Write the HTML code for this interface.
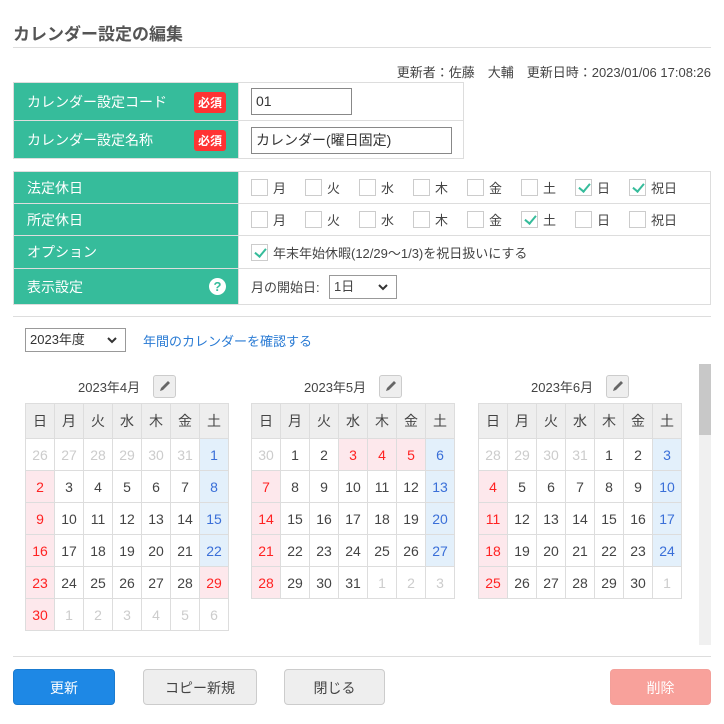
<!DOCTYPE html>
<html><head><meta charset="utf-8">
<style>
*{box-sizing:border-box;margin:0;padding:0}
body{width:724px;height:724px;background:#fff;font-family:"Liberation Sans","Noto Sans CJK JP",sans-serif;color:#444;font-size:13px;position:relative;overflow:hidden}
.abs{position:absolute}
h1{position:absolute;left:13px;top:20px;font-size:17px;font-weight:bold;color:#555}
.hr{position:absolute;left:13px;width:698px;height:1px;background:#ddd}
.tbl{position:absolute;border-collapse:collapse}
.tbl td{border:1px solid #ddd;vertical-align:middle;padding-top:0;padding-bottom:0}
.t1 td{height:38px}
.tbl td.l{background:#36bc9b;color:#fff;padding-left:13px;font-size:14px;width:225px;position:relative}
.req{position:absolute;right:12px;top:9px;background:#f33;color:#fff;font-size:12px;padding:2px 4px;border-radius:3px;font-weight:bold}
.inp{position:absolute;border:1px solid #888;height:27px;padding-left:4px;line-height:25px;font-size:14px;color:#333}
.cb{display:inline-block;width:17px;height:17px;border:1px solid #ccc;vertical-align:-3px;margin-right:5px;position:relative;background:#fff}
.cb.on::after{content:"";position:absolute;left:5px;top:1px;width:5px;height:9px;border-right:2px solid #36bc9b;border-bottom:2px solid #36bc9b;transform:rotate(40deg)}
.ci{display:inline-block;width:54px;font-size:13px;color:#444}
.mt{position:absolute;font-size:13px;color:#444}
.pen{position:absolute;width:23px;height:23px;border:1px solid #ccc;border-radius:3px;background:#eee}
.cal{position:absolute;border-collapse:collapse;width:204px;table-layout:fixed}
.cal td{border:1px solid #ddd;text-align:center;height:32px;font-size:14px;color:#444}
.cal tr.h td{background:#eee;height:35px}
.g{color:#ccc!important}.r{color:#f22!important;background:#fde8ec}.b{color:#3a6fd8!important;background:#e3f0fb}
.btn{position:absolute;top:669px;height:36px;border-radius:4px;text-align:center;line-height:36px;font-size:14px}
</style></head><body>
<h1>カレンダー設定の編集</h1>
<div class="hr" style="top:47px"></div>
<div class="abs" style="right:13px;top:62px;font-size:13px;color:#444">更新者：佐藤　大輔　更新日時：2023/01/06 17:08:26</div>

<table class="tbl t1" style="left:13px;top:82px;width:451px">
<tr><td class="l">カレンダー設定コード<span class="req">必須</span></td><td style="position:relative"><div class="inp" style="left:12px;top:5px;width:101px">01</div></td></tr>
<tr><td class="l">カレンダー設定名称<span class="req">必須</span></td><td style="position:relative"><div class="inp" style="left:12px;top:6px;width:201px">カレンダー(曜日固定)</div></td></tr>
</table>

<table class="tbl" style="left:13px;top:171px;width:698px">
<tr style="height:32px"><td class="l" style="height:32px">法定休日</td><td style="padding-left:12px;height:32px"><span class="ci"><span class="cb"></span>月</span><span class="ci"><span class="cb"></span>火</span><span class="ci"><span class="cb"></span>水</span><span class="ci"><span class="cb"></span>木</span><span class="ci"><span class="cb"></span>金</span><span class="ci"><span class="cb"></span>土</span><span class="ci"><span class="cb on"></span>日</span><span class="ci"><span class="cb on"></span>祝日</span></td></tr>
<tr style="height:32px"><td class="l" style="height:32px">所定休日</td><td style="padding-left:12px;height:32px"><span class="ci"><span class="cb"></span>月</span><span class="ci"><span class="cb"></span>火</span><span class="ci"><span class="cb"></span>水</span><span class="ci"><span class="cb"></span>木</span><span class="ci"><span class="cb"></span>金</span><span class="ci"><span class="cb on"></span>土</span><span class="ci"><span class="cb"></span>日</span><span class="ci"><span class="cb"></span>祝日</span></td></tr>
<tr style="height:33px"><td class="l" style="height:33px">オプション</td><td style="padding-left:12px;height:33px"><span class="cb on"></span>年末年始休暇(12/29～1/3)を祝日扱いにする</td></tr>
<tr style="height:36px"><td class="l" style="height:36px">表示設定<span style="position:absolute;right:12px;top:9px;width:17px;height:17px;border-radius:50%;background:#fff;color:#36bc9b;font-size:13px;font-weight:bold;text-align:center;line-height:17px">?</span></td><td style="padding-left:12px;position:relative;height:36px">月の開始日:<span style="position:absolute;left:90px;top:6px;width:68px;height:24px;border:1px solid #999;padding-left:4px;line-height:22px">1日<svg style="position:absolute;right:8px;top:8px" width="10" height="7"><path d="M1 1 L5 5 L9 1" stroke="#333" stroke-width="2" fill="none"/></svg></span></td></tr>
</table>

<div class="hr" style="top:316px"></div>
<div class="abs" style="left:25px;top:328px;width:101px;height:24px;border:1px solid #999;padding-left:4px;line-height:22px;font-size:13px;color:#333">2023年度<svg style="position:absolute;right:8px;top:8px" width="10" height="7"><path d="M1 1 L5 5 L9 1" stroke="#333" stroke-width="2" fill="none"/></svg></div>
<div class="abs" style="left:143px;top:331px;font-size:13px;color:#2a7bd4">年間のカレンダーを確認する</div>

<div class="abs" style="left:699px;top:364px;width:12px;height:281px;background:#f0f0f0"></div>
<div class="abs" style="left:699px;top:364px;width:12px;height:71px;background:#c8c8c8"></div>

<div class="mt" style="left:78px;top:377px">2023年4月</div>
<div class="pen" style="left:153px;top:375px"><svg width="21" height="21"><path d="M6 15 L7 12 L14 5 L16 7 L9 14 Z" fill="#666"/></svg></div>
<div class="mt" style="left:304px;top:377px">2023年5月</div>
<div class="pen" style="left:379px;top:375px"><svg width="21" height="21"><path d="M6 15 L7 12 L14 5 L16 7 L9 14 Z" fill="#666"/></svg></div>
<div class="mt" style="left:531px;top:377px">2023年6月</div>
<div class="pen" style="left:606px;top:375px"><svg width="21" height="21"><path d="M6 15 L7 12 L14 5 L16 7 L9 14 Z" fill="#666"/></svg></div>

<table class="cal" style="left:25px;top:403px">
<tr class="h"><td>日</td><td>月</td><td>火</td><td>水</td><td>木</td><td>金</td><td>土</td></tr>
<tr><td class="g">26</td><td class="g">27</td><td class="g">28</td><td class="g">29</td><td class="g">30</td><td class="g">31</td><td class="b">1</td></tr>
<tr><td class="r">2</td><td>3</td><td>4</td><td>5</td><td>6</td><td>7</td><td class="b">8</td></tr>
<tr><td class="r">9</td><td>10</td><td>11</td><td>12</td><td>13</td><td>14</td><td class="b">15</td></tr>
<tr><td class="r">16</td><td>17</td><td>18</td><td>19</td><td>20</td><td>21</td><td class="b">22</td></tr>
<tr><td class="r">23</td><td>24</td><td>25</td><td>26</td><td>27</td><td>28</td><td class="r">29</td></tr>
<tr><td class="r">30</td><td class="g">1</td><td class="g">2</td><td class="g">3</td><td class="g">4</td><td class="g">5</td><td class="g">6</td></tr>
</table>
<table class="cal" style="left:251px;top:403px">
<tr class="h"><td>日</td><td>月</td><td>火</td><td>水</td><td>木</td><td>金</td><td>土</td></tr>
<tr><td class="g">30</td><td>1</td><td>2</td><td class="r">3</td><td class="r">4</td><td class="r">5</td><td class="b">6</td></tr>
<tr><td class="r">7</td><td>8</td><td>9</td><td>10</td><td>11</td><td>12</td><td class="b">13</td></tr>
<tr><td class="r">14</td><td>15</td><td>16</td><td>17</td><td>18</td><td>19</td><td class="b">20</td></tr>
<tr><td class="r">21</td><td>22</td><td>23</td><td>24</td><td>25</td><td>26</td><td class="b">27</td></tr>
<tr><td class="r">28</td><td>29</td><td>30</td><td>31</td><td class="g">1</td><td class="g">2</td><td class="g">3</td></tr>
</table>
<table class="cal" style="left:478px;top:403px">
<tr class="h"><td>日</td><td>月</td><td>火</td><td>水</td><td>木</td><td>金</td><td>土</td></tr>
<tr><td class="g">28</td><td class="g">29</td><td class="g">30</td><td class="g">31</td><td>1</td><td>2</td><td class="b">3</td></tr>
<tr><td class="r">4</td><td>5</td><td>6</td><td>7</td><td>8</td><td>9</td><td class="b">10</td></tr>
<tr><td class="r">11</td><td>12</td><td>13</td><td>14</td><td>15</td><td>16</td><td class="b">17</td></tr>
<tr><td class="r">18</td><td>19</td><td>20</td><td>21</td><td>22</td><td>23</td><td class="b">24</td></tr>
<tr><td class="r">25</td><td>26</td><td>27</td><td>28</td><td>29</td><td>30</td><td class="g">1</td></tr>
</table>

<div class="hr" style="top:656px"></div>
<div class="btn" style="left:13px;width:102px;background:#1e88e5;color:#fff;border:1px solid #1a7bd0">更新</div>
<div class="btn" style="left:143px;width:114px;background:#eee;border:1px solid #ccc;color:#444">コピー新規</div>
<div class="btn" style="left:284px;width:101px;background:#eee;border:1px solid #ccc;color:#444">閉じる</div>
<div class="btn" style="left:610px;width:101px;background:#f8a19b;color:#fff;border:1px solid #f3a09a">削除</div>
</body></html>
